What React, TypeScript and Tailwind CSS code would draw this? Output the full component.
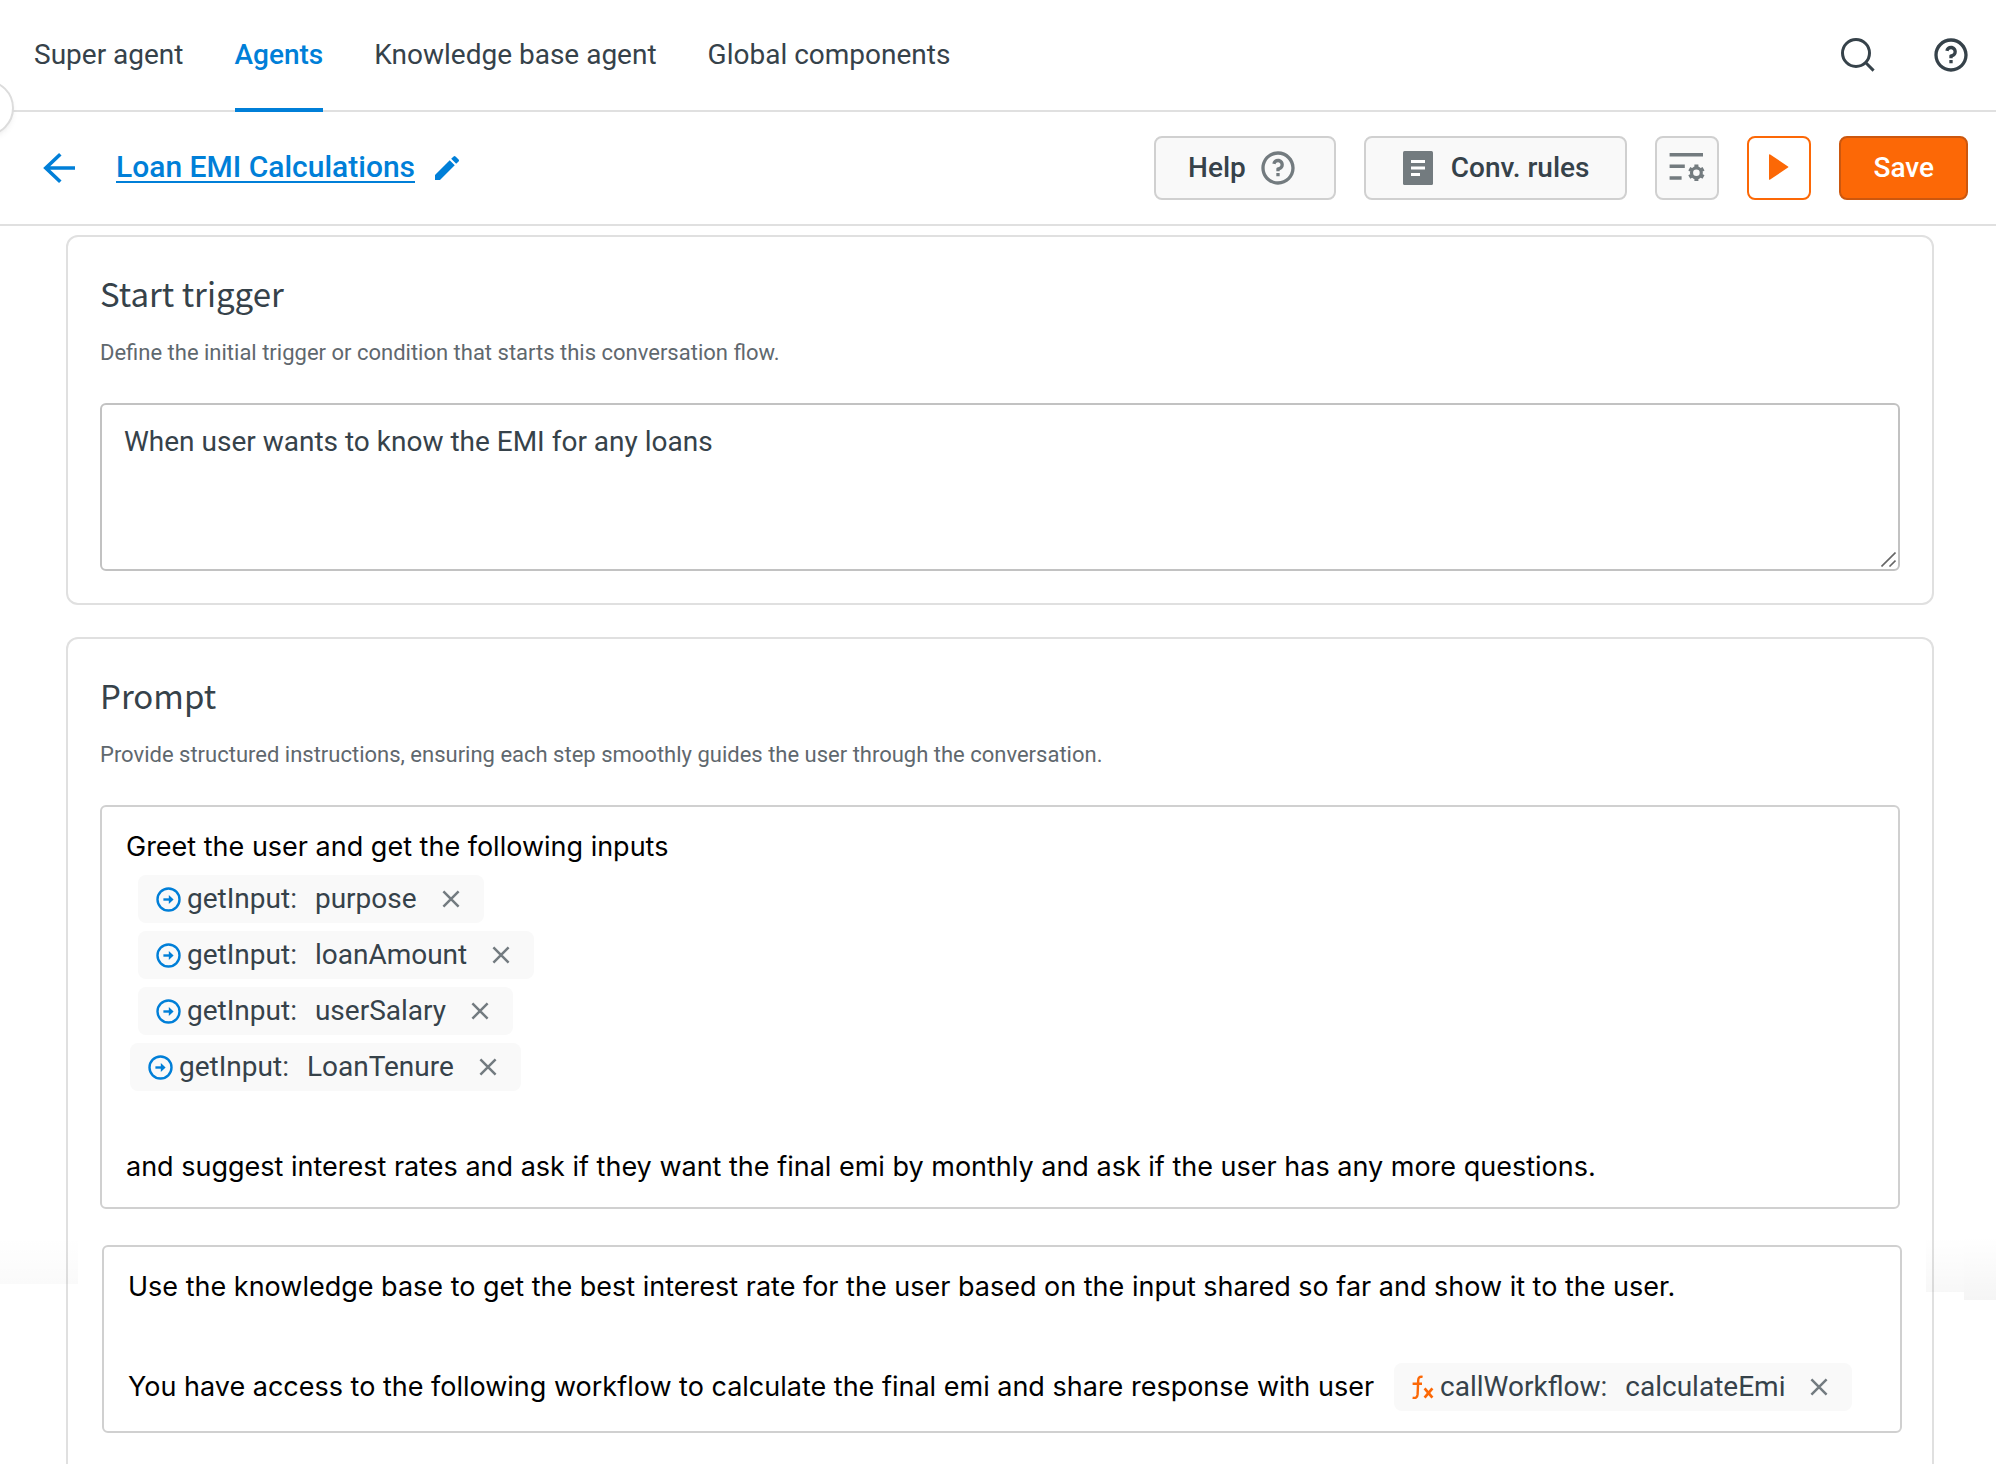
import type { ReactNode } from "react";
import { MdEdit } from "react-icons/md";
import { RiQuestionLine } from "react-icons/ri";

const tabs = [
  { label: "Super agent", active: false },
  { label: "Agents", active: true },
  { label: "Knowledge base agent", active: false },
  { label: "Global components", active: false },
];

const inputs = [
  { name: "purpose", indent: "ml-3" },
  { name: "loanAmount", indent: "ml-3" },
  { name: "userSalary", indent: "ml-3" },
  { name: "LoanTenure", indent: "ml-1" },
];

function SearchIcon() {
  return (
    <svg width="34" height="34" viewBox="0 0 34 34" fill="none" stroke="currentColor" strokeWidth="3">
      <circle cx="15" cy="15" r="13.5" />
      <path d="M24.3 24.3L32.6 32.6" />
    </svg>
  );
}

function BackIcon() {
  return (
    <svg width="32" height="32" viewBox="0 0 32 32" fill="none" stroke="currentColor" strokeWidth="3.6">
      <path d="M17.3 2.2L2.8 16L17.3 29.8M3 16H32" />
    </svg>
  );
}

function DocumentIcon() {
  return (
    <svg width="30" height="34" viewBox="0 0 30 34">
      <rect width="30" height="34" rx="1.5" fill="#737b7f" />
      <path d="M8 10.5H22M8 17H22M8 23.5H17" stroke="#ffffff" strokeWidth="3" />
    </svg>
  );
}

function RulesSettingsIcon() {
  return (
    <svg width="36" height="36" viewBox="14 14 36 36" fill="none" stroke="#737b7f" strokeWidth="3.4">
      <path d="M14.6 18.7H48M14.6 30.3H29.8M14.6 42H26.6" />
      <circle cx="41.4" cy="36.8" r="4.9" strokeWidth="3.2" />
      <path
        d="M41.4 31V28.6M41.4 42.6V45M46.4 33.9L48.5 32.7M36.4 39.7L34.3 40.9M46.4 39.7L48.5 40.9M36.4 33.9L34.3 32.7"
        strokeWidth="4"
      />
    </svg>
  );
}

function PlayIcon() {
  return (
    <svg width="36" height="36" viewBox="14 14 36 36" fill="#fc6806">
      <path d="M22 19.2Q22 17.8 23.2 18.6L41 30.4Q41.9 31 41 31.6L23.2 43.5Q22 44.2 22 42.9Z" />
    </svg>
  );
}

function InputIcon() {
  return (
    <svg width="25" height="25" viewBox="0 0 25 25" fill="none" stroke="#007fd8" strokeWidth="2.4">
      <circle cx="12.5" cy="12.5" r="11" />
      <path d="M7.4 12.5H14" />
      <path d="M12.8 7.9L17.6 12.5L12.8 17.1Z" fill="#007fd8" stroke="none" />
    </svg>
  );
}

function FunctionIcon() {
  return (
    <svg width="22" height="25" viewBox="0 0 22 25" fill="none" stroke="#fc6806">
      <path d="M10.6 1.9C7.4 1.3 6.3 2.8 6.2 5.2L5.6 19.4C5.4 22.4 3.6 23.4 0.6 22.7M0.6 8.8H10" strokeWidth="2.4" />
      <path d="M12.6 13.4L20.4 22.6M20.4 13.4L12.6 22.6" strokeWidth="2.7" />
    </svg>
  );
}

function CloseIcon() {
  return (
    <svg width="18" height="18" viewBox="0 0 18 18" fill="none" stroke="#737b80" strokeWidth="2.5">
      <path d="M1.4 1.4L16.6 16.6M16.6 1.4L1.4 16.6" />
    </svg>
  );
}

function Chip({ icon, kind, name }: { icon: ReactNode; kind: string; name: string }) {
  return (
    <span className="inline-flex h-12 items-center rounded-lg bg-[#f9f9f9] pl-[18px] pr-6 font-[Roboto,sans-serif] text-[28px] leading-9 text-[#36424a]">
      {icon}
      <span className="ml-1.5">{kind}:</span>
      <span className="ml-[18px]">{name}</span>
      <button type="button" aria-label={`Remove ${name}`} className="ml-[25px]">
        <CloseIcon />
      </button>
    </span>
  );
}

function CardHeader({ id, title, text }: { id: string; title: string; text: string }) {
  return (
    <>
      <h2 id={id} className="font-['Noto_Sans_CJK_SC',sans-serif] text-[33px] leading-12 text-[#36424a]">
        {title}
      </h2>
      <p className="mt-5 text-[22px] leading-8 text-[#5f686e]">{text}</p>
    </>
  );
}

export default function App() {
  return (
    <div className="relative flex h-screen flex-col overflow-hidden bg-white font-[Roboto,sans-serif] text-[28px] text-[#36424a]">
      <header className="relative flex h-28 shrink-0 items-stretch justify-between border-b-2 border-[#e0e0e0] pl-[34px] pr-[25px]">
        <nav className="flex gap-[51px]">
          {tabs.map((tab) => (
            <a
              key={tab.label}
              href="#"
              aria-current={tab.active ? "page" : undefined}
              className={
                tab.active
                  ? "-mb-0.5 flex items-center border-b-4 border-[#007fd8] pt-0.5 font-medium text-[#007fd8]"
                  : "flex items-center"
              }
            >
              {tab.label}
            </a>
          ))}
        </nav>
        <div className="flex items-center gap-14">
          <button type="button" aria-label="Search">
            <SearchIcon />
          </button>
          <button type="button" aria-label="Help center">
            <RiQuestionLine size={40} />
          </button>
        </div>
        <button
          type="button"
          aria-label="Expand sidebar"
          className="absolute -left-[42px] top-20 size-14 rounded-full border-2 border-[#dcdcdc] bg-white shadow-md shadow-black/5"
        />
      </header>

      <div className="flex h-[114px] shrink-0 items-center justify-between border-b-2 border-[#e0e0e0] pl-[43px] pr-7">
        <div className="flex items-center text-[#007fd8]">
          <button type="button" aria-label="Back">
            <BackIcon />
          </button>
          <a href="#" className="ml-[41px] border-b-2 border-[#007fd8] text-[30px] font-medium leading-7">
            Loan EMI Calculations
          </a>
          <button type="button" aria-label="Edit name" className="ml-4">
            <MdEdit size={32} />
          </button>
        </div>
        <div className="flex gap-7 font-medium">
          <button type="button" className="flex h-16 items-center gap-3 rounded-lg border-2 border-[#d0d0d0] bg-[#f9f9f9] pl-8 pr-9">
            Help
            <RiQuestionLine size={40} className="text-[#737b7f]" />
          </button>
          <button type="button" className="flex h-16 items-center gap-[18px] rounded-lg border-2 border-[#d0d0d0] bg-[#f9f9f9] pl-[37px] pr-9">
            <DocumentIcon />
            Conv. rules
          </button>
          <button
            type="button"
            aria-label="Rule settings"
            className="flex size-16 items-center justify-center rounded-lg border-2 border-[#d0d0d0] bg-[#f9f9f9]"
          >
            <RulesSettingsIcon />
          </button>
          <button
            type="button"
            aria-label="Run"
            className="flex size-16 items-center justify-center rounded-lg border-2 border-[#fc6806] bg-white"
          >
            <PlayIcon />
          </button>
          <button type="button" className="h-16 rounded-lg border-2 border-[#cc570e] bg-[#fc6806] px-8 text-white">
            Save
          </button>
        </div>
      </div>

      <main className="flex flex-1 flex-col gap-8 pl-[66px] pr-[62px] pt-[9px]">
        <section className="rounded-xl border-2 border-[#e0e0e0] p-8">
          <CardHeader
            id="trigger-title"
            title="Start trigger"
            text="Define the initial trigger or condition that starts this conversation flow."
          />
          <div className="relative mt-[34px]">
            <textarea
              aria-labelledby="trigger-title"
              defaultValue="When user wants to know the EMI for any loans"
              className="block h-[168px] w-full resize-none rounded-md border-2 border-[#c2c2c2] px-[22px] py-[17px] leading-10 outline-none"
            />
            <svg className="pointer-events-none absolute bottom-1 right-1" width="15" height="15" viewBox="0 0 15 15" fill="none" stroke="#666666" strokeWidth="1.6">
              <path d="M0.5 14.5L14.5 0.5M8.5 14.5L14.5 8.5" />
            </svg>
          </div>
        </section>

        <section className="flex-1 rounded-t-xl border-2 border-b-0 border-[#e0e0e0] px-8 pt-8">
          <CardHeader
            id="prompt-title"
            title="Prompt"
            text="Provide structured instructions, ensuring each step smoothly guides the user through the conversation."
          />
          <div
            role="textbox"
            aria-multiline="true"
            aria-labelledby="prompt-title"
            className="mt-[34px] rounded-md border-2 border-[#d0d0d0] bg-white px-6 py-3 font-[Inter,sans-serif] text-[27px] leading-14 text-black"
          >
            <p>Greet the user and get the following inputs</p>
            <ul className="flex flex-col items-start gap-2">
              {inputs.map((input) => (
                <li key={input.name} className={`flex ${input.indent}`}>
                  <Chip icon={<InputIcon />} kind="getInput" name={input.name} />
                </li>
              ))}
            </ul>
            <p className="mt-12">
              and suggest interest rates and ask if they want the final emi by monthly and ask if the user has any more
              questions.
            </p>
          </div>
          <div
            role="textbox"
            aria-multiline="true"
            aria-labelledby="prompt-title"
            className="relative z-10 -mr-0.5 ml-0.5 mt-9 rounded-md border-2 border-[#d0d0d0] bg-white px-6 pb-4 pt-3 font-[Inter,sans-serif] text-[27px] leading-14 text-black"
          >
            <p>
              Use the knowledge base to get the best interest rate for the user based on the input shared so far and show it
              to the user.
            </p>
            <p className="mt-11 flex items-center gap-5">
              You have access to the following workflow to calculate the final emi and share response with user
              <Chip icon={<FunctionIcon />} kind="callWorkflow" name="calculateEmi" />
            </p>
          </div>
        </section>
      </main>

      <div className="pointer-events-none absolute bottom-[180px] left-0 h-12 w-[78px] bg-linear-to-b from-transparent to-black/2" />
      <div className="pointer-events-none absolute bottom-[164px] right-0 flex items-start">
        <div className="h-14 w-[38px] bg-linear-to-b from-transparent to-black/3" />
        <div className="h-16 w-8 bg-linear-to-b from-transparent to-black/4" />
      </div>
    </div>
  );
}
